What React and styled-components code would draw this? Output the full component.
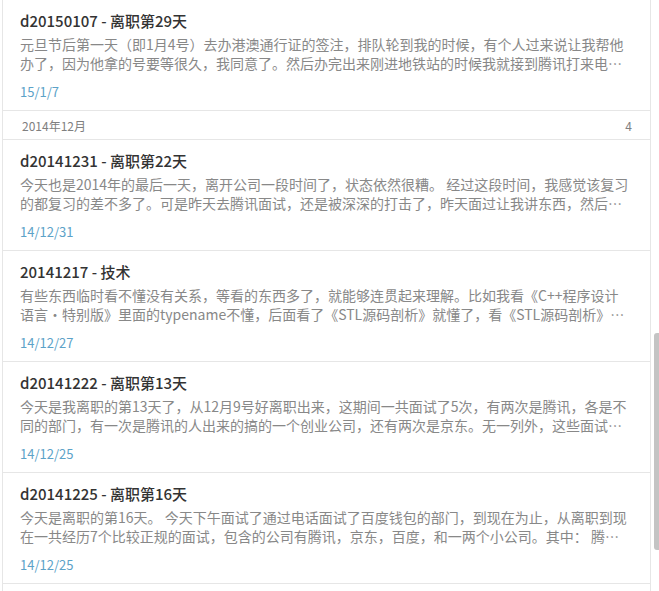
import React from 'react';
import styled, { createGlobalStyle } from 'styled-components';


const borderColor = "#e6e6e6";

const GlobalStyle = createGlobalStyle`
  html, body {
    margin: 0;
    padding: 0;
    background: #fff;
  }
  body {
    font-family: "Noto Sans CJK SC", "Noto Sans", "Liberation Sans", sans-serif;
    -webkit-font-smoothing: antialiased;
  }
`;

const Page = styled.div`
  display: flex;
  height: 591px;
  overflow: hidden;
  padding-left: 2px;
`;

const List = styled.div`
  width: 648px;
  border-left: 1px solid ${borderColor};
  border-right: 1px solid ${borderColor};
  display: flex;
  flex-direction: column;
`;

const ScrollTrack = styled.div`
  width: 8px;
  display: flex;
  justify-content: flex-end;
`;

const ScrollThumb = styled.div`
  margin-top: 333px;
  width: 5px;
  height: 217px;
  border-radius: 3px 0 0 3px;
  background: #c4c4c4;
`;

const Item = styled.div`
  padding: 11px 19px 9px 17px;
  border-bottom: 1px solid ${borderColor};
  display: flex;
  flex-direction: column;
`;

const Title = styled.div`
  font-size: 15px;
  font-weight: 500;
  line-height: 20px;
  color: #333;
`;

const Summary = styled.div`
  margin-top: 4px;
  font-size: 14px;
  line-height: 19px;
  color: #888;
  display: -webkit-box;
  -webkit-box-orient: vertical;
  -webkit-line-clamp: 2;
  overflow: hidden;
`;

const DateText = styled.div`
  margin-top: 10px;
  font-size: 13px;
  line-height: 18px;
  color: #5ca2c8;
`;

const GroupHeader = styled.div`
  height: 28px;
  padding: 0 18px 0 19px;
  border-bottom: 1px solid ${borderColor};
  display: flex;
  align-items: center;
  justify-content: space-between;
  font-size: 12px;
  color: #808080;
`;


const notes = [
  {
    title: "d20150107 - 离职第29天",
    summary: "元旦节后第一天（即1月4号）去办港澳通行证的签注，排队轮到我的时候，有个人过来说让我帮他办了，因为他拿的号要等很久，我同意了。然后办完出来刚进地铁站的时候我就接到腾讯打来电话，说要约我下午过去面试。",
    date: "15/1/7",
  },
  { group: "2014年12月", count: 4 },
  {
    title: "d20141231 - 离职第22天",
    summary: "今天也是2014年的最后一天，离开公司一段时间了，状态依然很糟。 经过这段时间，我感觉该复习的都复习的差不多了。可是昨天去腾讯面试，还是被深深的打击了，昨天面过让我讲东西，然后他问了很多问题。",
    date: "14/12/31",
  },
  {
    title: "20141217 - 技术",
    summary: "有些东西临时看不懂没有关系，等看的东西多了，就能够连贯起来理解。比如我看《C++程序设计语言·特别版》里面的typename不懂，后面看了《STL源码剖析》就懂了，看《STL源码剖析》的时候也是这样。",
    date: "14/12/27",
  },
  {
    title: "d20141222 - 离职第13天",
    summary: "今天是我离职的第13天了，从12月9号好离职出来，这期间一共面试了5次，有两次是腾讯，各是不同的部门，有一次是腾讯的人出来的搞的一个创业公司，还有两次是京东。无一列外，这些面试全部都挂了。",
    date: "14/12/25",
  },
  {
    title: "d20141225 - 离职第16天",
    summary: "今天是离职的第16天。 今天下午面试了通过电话面试了百度钱包的部门，到现在为止，从离职到现在一共经历7个比较正规的面试，包含的公司有腾讯，京东，百度，和一两个小公司。其中： 腾讯面了三次。",
    date: "14/12/25",
  },
];


function NoteItem(props) {
  return (
    <Item>
      <Title>{props.title}</Title>
      <Summary>{props.summary}</Summary>
      <DateText>{props.date}</DateText>
    </Item>
  );
}

function MonthHeader(props) {
  return (
    <GroupHeader>
      <span>{props.label}</span>
      <span>{props.count}</span>
    </GroupHeader>
  );
}

export default function App() {
  return (
    <>
      <GlobalStyle />
      <Page>
        <List>
          {notes.map((n, i) =>
            n.group
              ? <MonthHeader key={i} label={n.group} count={n.count} />
              : <NoteItem key={i} title={n.title} summary={n.summary} date={n.date} />
          )}
        </List>
        <ScrollTrack>
          <ScrollThumb />
        </ScrollTrack>
      </Page>
    </>
  );
}
